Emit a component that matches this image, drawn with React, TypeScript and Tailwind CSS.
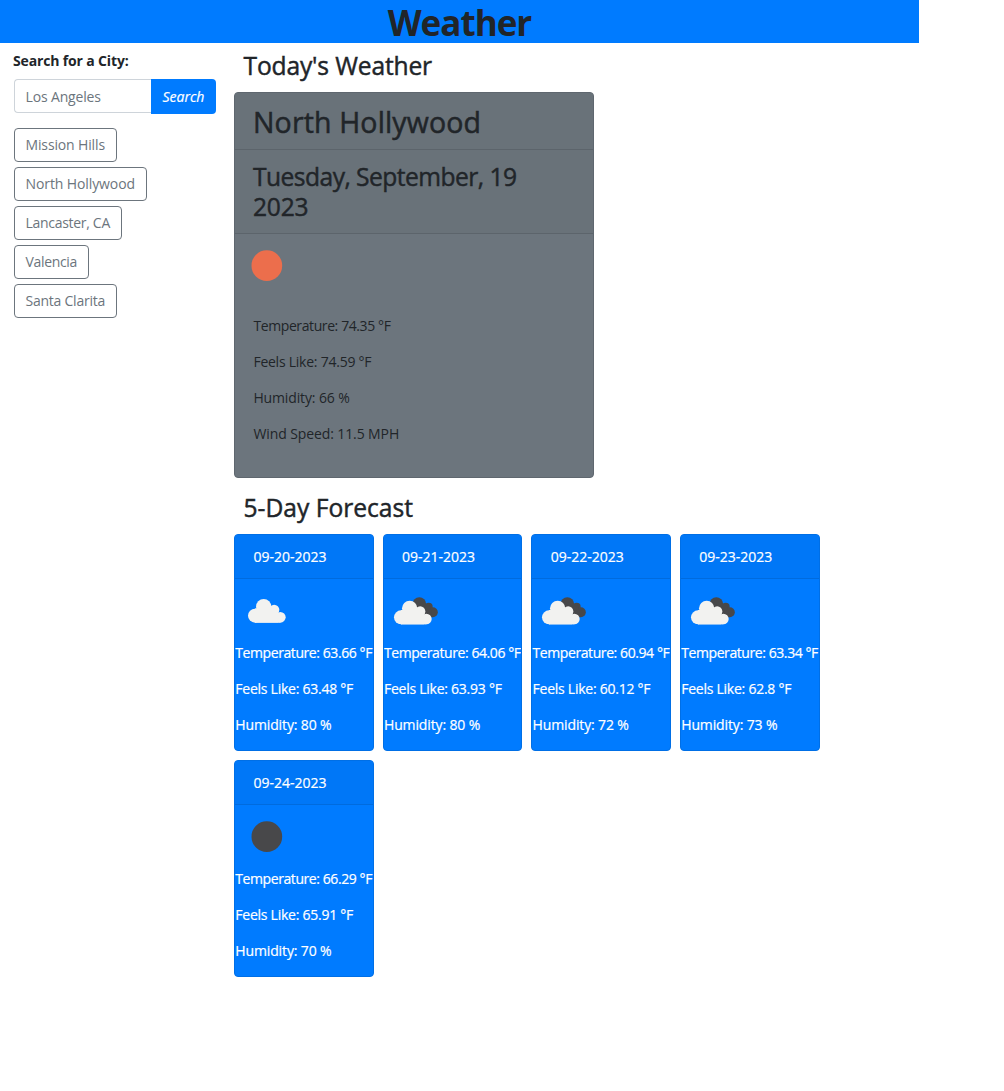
type IconName = "sun" | "cloud" | "clouds" | "moon";

const CITIES = [
  { name: "Mission Hills", cls: "w-[103px] tracking-[-0.14px]" },
  { name: "North Hollywood", cls: "w-[133px] tracking-[-0.1px]" },
  { name: "Lancaster, CA", cls: "w-[108px] tracking-[-0.3px]" },
  { name: "Valencia", cls: "w-[75px] tracking-[-0.34px]" },
  { name: "Santa Clarita", cls: "w-[103px] tracking-[-0.24px]" },
];

const DAYS: { date: string; icon: IconName; temp: string; feels: string; humidity: string }[] = [
  { date: "09-20-2023", icon: "cloud", temp: "63.66", feels: "63.48", humidity: "80" },
  { date: "09-21-2023", icon: "clouds", temp: "64.06", feels: "63.93", humidity: "80" },
  { date: "09-22-2023", icon: "clouds", temp: "60.94", feels: "60.12", humidity: "72" },
  { date: "09-23-2023", icon: "clouds", temp: "63.34", feels: "62.8", humidity: "73" },
  { date: "09-24-2023", icon: "moon", temp: "66.29", feels: "65.91", humidity: "70" },
];

function Cloud() {
  return (
    <g fill="#f2f2f0">
      <circle cx="60" cy="107" r="21" />
      <circle cx="86" cy="80" r="23" />
      <circle cx="117.5" cy="89.5" r="15.5" />
      <circle cx="136" cy="112" r="16" />
      <rect x="60" y="85" width="70" height="43" />
      <rect x="60" y="110" width="76" height="18" />
    </g>
  );
}

function WeatherIcon({ name }: { name: IconName }) {
  return (
    <svg className="block h-[60px] w-[60px]" viewBox="0 -3 180 180" aria-hidden="true">
      {name === "cloud" && <Cloud />}
      {name === "clouds" && (
        <>
          <g fill="#48484a">
            <circle cx="106" cy="72" r="20.5" />
            <circle cx="134" cy="80" r="12" />
            <circle cx="146.5" cy="97" r="15" />
            <path d="M106 72h30l10 40h-30z" />
          </g>
          <g transform="translate(-9 5)">
            <Cloud />
          </g>
        </>
      )}
      {name === "sun" && <circle cx="95.5" cy="92" r="46" fill="#ec6e4c" />}
      {name === "moon" && <circle cx="95.5" cy="92" r="46" fill="#48484a" />}
    </svg>
  );
}

export default function App() {
  return (
    <div className="min-h-[1091px] w-full bg-white font-['Open_Sans',sans-serif] text-[14px] leading-[21.6px] text-[#212529]">
      <header className="flex h-[43px] w-[919px] items-center justify-center bg-[#007bff]">
        <h1 className="pt-[3px] text-[35px] font-bold leading-[40px] tracking-[-1px]">Weather</h1>
      </header>

      <div className="flex w-[919px]">
        <aside className="w-[234px] pl-[14px] pt-[7px]">
          <h2 className="-ml-px text-[14px] font-bold tracking-[-0.15px]">Search for a City:</h2>
          <div className="mt-[7px] flex items-start">
            <input
              className="h-[34px] w-[137px] rounded-l border border-r-0 border-[#ced4da] px-[10.5px] pt-[2px] tracking-[-0.15px] outline-none placeholder:text-[#6c757d]"
              placeholder="Los Angeles"
            />
            <button className="h-[35px] w-[65px] rounded-r bg-[#007bff] pt-px italic text-white [-webkit-text-stroke:0.2px]">
              Search
            </button>
          </div>
          <div className="mt-[14px] flex flex-col items-start gap-[5px]">
            {CITIES.map((c) => (
              <button
                key={c.name}
                className={`h-[34px] whitespace-nowrap rounded border border-[#6c757d] pl-[10.5px] text-left text-[#6c757d] ${c.cls}`}
              >
                {c.name}
              </button>
            ))}
          </div>
        </aside>

        <main className="w-[640px] pt-2">
          <h3 className="pl-[9.5px] text-[24.6px] font-medium leading-[30px] tracking-[-0.15px] [-webkit-text-stroke:0.45px]">
            Today's Weather
          </h3>
          <section className="mt-[11px] h-[386px] w-[360px] overflow-hidden rounded border border-[#5f676f] bg-[#6c757d]">
            <h2 className="h-[57px] border-b border-[#5c646b] bg-[#697279] pl-[18px] pt-3 text-[28.5px] font-medium leading-[35px] tracking-[0.15px] [-webkit-text-stroke:0.5px]">
              North Hollywood
            </h2>
            <h3 className="h-[84px] border-b border-[#5c646b] bg-[#697279] pl-[18px] pt-3 text-[24.6px] font-medium leading-[30px] tracking-[-0.54px] [-webkit-text-stroke:0.45px]">
              Tuesday, September, 19
              <br />
              <span className="tracking-[-0.2px]">2023</span>
            </h3>
            <WeatherIcon name="sun" />
            <div className="flex flex-col gap-[14.4px] pl-[18.4px] pt-[21px]">
              <p className="tracking-[-0.4px]">Temperature: 74.35 °F</p>
              <p className="tracking-[-0.24px]">Feels Like: 74.59 °F</p>
              <p className="tracking-[-0.13px]">Humidity: 66 %</p>
              <p className="tracking-[-0.1px]">Wind Speed: 11.5 MPH</p>
            </div>
          </section>

          <h3 className="mt-[15px] pl-[9.5px] text-[24.6px] font-medium leading-[30px] [-webkit-text-stroke:0.45px]">
            5-Day Forecast
          </h3>
          <div className="mt-[11px] flex flex-wrap gap-x-[8.8px] gap-y-[9px]">
            {DAYS.map((d) => (
              <article
                key={d.date}
                className="h-[217px] w-[139.85px] overflow-hidden rounded border border-[#006fe6] bg-[#007bff] text-white [-webkit-text-stroke:0.2px]"
              >
                <h4 className="h-[44px] border-b border-[#006bde] bg-[#0077f7] pl-[18.4px] pt-[11px]">{d.date}</h4>
                <WeatherIcon name={d.icon} />
                <div className="flex flex-col gap-[14.4px] whitespace-nowrap pl-[0.3px] pt-[3px]">
                  <p className="tracking-[-0.42px]">Temperature: {d.temp} °F</p>
                  <p className="tracking-[-0.25px]">Feels Like: {d.feels} °F</p>
                  <p className="tracking-[-0.13px]">Humidity: {d.humidity} %</p>
                </div>
              </article>
            ))}
          </div>
        </main>
      </div>
    </div>
  );
}
